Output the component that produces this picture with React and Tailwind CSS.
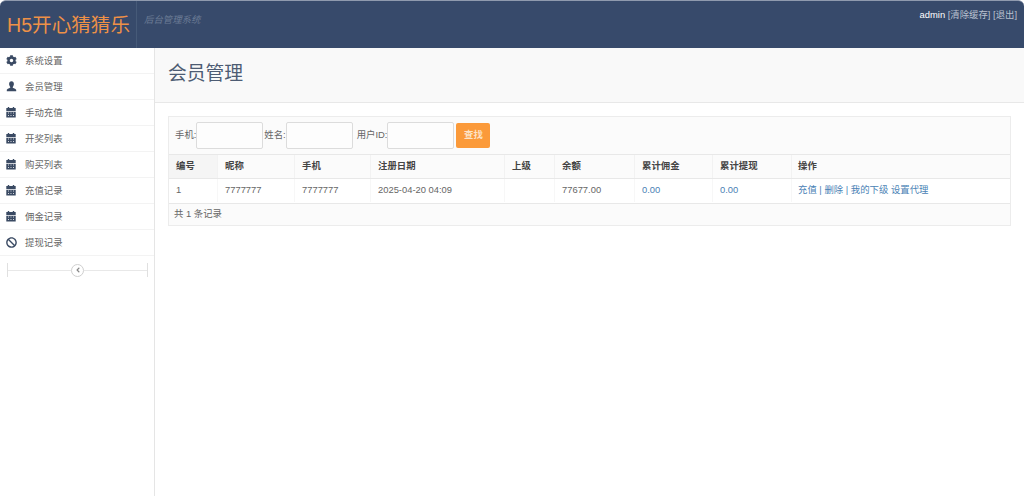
import React from "react";
import { FaCog, FaBan, FaAngleLeft } from "react-icons/fa";

const font = "font-['Liberation_Sans','Noto_Sans_CJK_SC',sans-serif]";

function Cal() {
  return (
    <svg width="10" height="11" viewBox="0 0 10 11" fill="currentColor">
      <rect x="1.8" y="0" width="1.4" height="2" />
      <rect x="6.8" y="0" width="1.4" height="2" />
      <rect x="0.3" y="1" width="9.4" height="3" />
      <path fillRule="evenodd" d="M0.3 4.7h9.4V10.5H0.3z M2.2 5.6h.8v1h-.8z M4.6 5.6h.8v1h-.8z M7 5.6h.8v1H7z M2.2 8h.8v1h-.8z M4.6 8h.8v1h-.8z M7 8h.8v1H7z" />
    </svg>
  );
}

function Person() {
  return (
    <svg width="11" height="11" viewBox="0 0 11 11" fill="currentColor">
      <path d="M5.5 0.3c1.6 0 2.4 1.2 2.4 2.8 0 1.2-.5 2.2-1.1 2.8v.8c0 .5 3.4.9 3.4 2.3v1.3H0.8V9c0-1.4 3.4-1.8 3.4-2.3v-.8C3.6 5.3 3.1 4.3 3.1 3.1c0-1.6.8-2.8 2.4-2.8z" />
    </svg>
  );
}

const menu = [
  ["系统设置", FaCog],
  ["会员管理", Person],
  ["手动充值", Cal],
  ["开奖列表", Cal],
  ["购买列表", Cal],
  ["充值记录", Cal],
  ["佣金记录", Cal],
  ["提现记录", FaBan],
];

const cols = [
  ["编号", "w-[49px]", "1", ""],
  ["昵称", "w-[77px]", "7777777", ""],
  ["手机", "w-[76px]", "7777777", ""],
  ["注册日期", "w-[134px]", "2025-04-20 04:09", ""],
  ["上级", "w-[50px]", "", ""],
  ["余额", "w-[80px]", "77677.00", ""],
  ["累计佣金", "w-[78px]", "0.00", "text-[#4a82b5]"],
  ["累计提现", "w-[79px]", "0.00", "text-[#4a82b5]"],
];

function Field({ label, labelClass }) {
  return (
    <>
      <span className={labelClass}>{label}</span>
      <input className="h-[27px] w-[67px] rounded-[2px] border border-[#dcdcdc] bg-[#fdfdfd]" />
    </>
  );
}

export default function App() {
  return (
    <div className={`${font} flex h-[496px] w-[1024px] flex-col overflow-hidden bg-white text-[9.4px] text-[#666]`}>
      <header className="flex h-[48px] shrink-0 rounded-t-[6px] border-t border-[#8f9aae] bg-[#374a6b] pl-[7px] pr-[7px]">
        <div className="flex h-[47px] items-center border-r border-[#465a78] pr-[6px] pt-[2px] text-[19.6px] text-[#ee9147]">
          H5开心猜猜乐
        </div>
        <div className="ml-[7px] mt-[12px] text-[9.4px] italic text-[#6b7b95]">后台管理系统</div>
        <div className="ml-auto mt-[7px] text-[9.4px] text-[#b9c1cf]">
          <span className="text-white">admin</span> [清除缓存] [退出]
        </div>
      </header>
      <div className="flex min-h-0 flex-1">
        <aside className="w-[155px] shrink-0 border-r border-[#e5e5e5]">
          {menu.map(([label, Icon]) => (
            <div key={label} className="flex h-[26px] items-center border-b border-[#f3f3f3] pl-[6px]">
              <span className="flex w-[19px] text-[#3a4a63]">
                <Icon size={11} />
              </span>
              <span className="pt-[2px]">{label}</span>
            </div>
          ))}
          <div className="ml-[7px] mr-[6px] mt-[7px] flex h-[14px] items-center border-x border-[#e0e0e0]">
            <div className="h-px flex-1 bg-[#e8e8e8]" />
            <div className="flex h-[13px] w-[13px] items-center justify-center rounded-full border border-[#cfcfcf] text-[#888]">
              <FaAngleLeft size={8} />
            </div>
            <div className="h-px flex-1 bg-[#e8e8e8]" />
          </div>
        </aside>
        <main className="min-w-0 flex-1">
          <div className="flex h-[55px] items-center border-b border-[#e8e8e8] bg-[#f9f9f9] pl-[13px] pb-[2px] text-[18.8px] text-[#4d5c73]">
            会员管理
          </div>
          <div className="ml-[13px] mt-[13px] w-[843px] border border-[#ececec] bg-[#fbfbfb]">
            <div className="flex h-[37px] items-center pl-[6px]">
              <Field label="手机:" />
              <Field label="姓名:" labelClass="ml-[1px]" />
              <Field label="用户ID:" labelClass="ml-[4px]" />
              <button className="ml-[2px] h-[25px] w-[34px] rounded-[2px] bg-[#fb9a3a] font-bold text-[#fde3c8]">查找</button>
            </div>
            <div className="flex h-[24px] items-center border-t border-[#e8e8e8] font-bold text-[#444]">
              {cols.map(([h, w], i) => (
                <div key={h} className={`${w} flex h-full items-center border-r border-[#f2f2f2] pl-[7px] ${i === 0 ? "bg-[#f5f5f5]" : ""}`}>{h}</div>
              ))}
              <div className="pl-[6px]">操作</div>
            </div>
            <div className="flex h-[26px] items-center border-y border-[#e8e8e8] bg-white pb-[1px]">
              {cols.map(([h, w, v, c]) => (
                <div key={h} className={`${w} ${c} flex h-full items-center border-r border-[#f7f7f7] pl-[7px]`}>{v}</div>
              ))}
              <div className="pl-[6px] text-[#4a82b5]">充值 | 删除 | 我的下级 设置代理</div>
            </div>
            <div className="flex h-[21px] items-center pl-[5px]">共 1 条记录</div>
          </div>
        </main>
      </div>
    </div>
  );
}
